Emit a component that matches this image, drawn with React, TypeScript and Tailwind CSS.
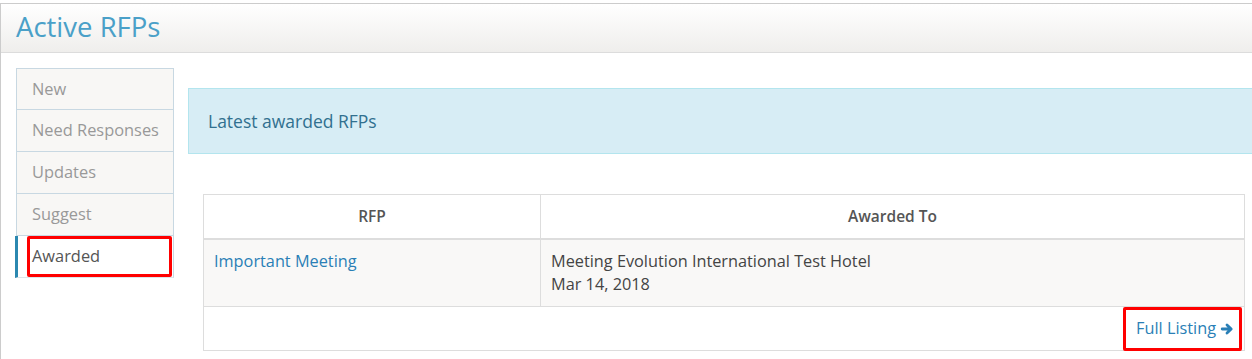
import React from "react";

const font = { fontFamily: '"Open Sans", "Liberation Sans", sans-serif' };

function Arrow() {
  return (
    <svg width="14" height="14" viewBox="0 0 16 16" className="ml-[4px]">
      <path d="M2.5 8H12.5M8 3.5L12.8 8L8 12.5" fill="none" stroke="#2a7fb6" strokeWidth="3.2" strokeLinecap="round" strokeLinejoin="round" />
    </svg>
  );
}

export default function App() {
  const items = ["New", "Need Responses", "Updates", "Suggest"];
  return (
    <div className="w-[1252px] h-[359px] bg-white pt-[3px] overflow-hidden" style={font}>
      <div className="border-t border-l border-[#cccccc] h-[356px] overflow-hidden">
        <div className="h-[49px] border-b border-[#dcdcdc] bg-gradient-to-b from-white to-[#efeeec] flex items-center pl-[15px]">
          <h1 className="text-[27.5px] text-[#4aa0c8] leading-none mt-[-3px]">Active RFPs</h1>
        </div>
        <div className="flex pl-[15px] pt-[15px]">
          <ul className="w-[158px] shrink-0">
            {items.map((t, i) => (
              <li
                key={t}
                className={`h-[42px] bg-[#f8f7f5] border-x border-b border-[#c8d8e2] ${i === 0 ? "border-t" : ""} flex items-center pl-[15px] text-[16.4px] text-[#999999]`}
              >
                {t}
              </li>
            ))}
            <li className="relative h-[42px] bg-white border-l-[3px] border-[#2b88b0] ml-[-1px] border-r border-r-[#c8d8e2] border-b border-b-[#dde5ea] flex items-center pl-[14px] text-[16.4px] text-[#555]">
              Awarded
              <span className="absolute left-[9px] right-[1px] top-0 bottom-0 border-[3px] border-[#ff0000] rounded-[2px]" />
            </li>
          </ul>
          <div className="ml-[14px] pt-[20px] flex-1 min-w-0">
            <div className="w-[1100px] h-[66px] bg-[#d7edf5] border border-[#b3e5ee] flex items-center pl-[19px] text-[17.5px] text-[#31708f]">
              Latest awarded RFPs
            </div>
            <div className="ml-[15px] mt-[40px] w-[1042px] border border-[#dddddd] text-[16.3px]">
              <div className="flex h-[45px] border-b-2 border-[#dddddd] font-semibold text-[15.5px] text-[#555]">
                <div className="w-[337px] border-r border-[#dddddd] flex items-center justify-center">RFP</div>
                <div className="flex-1 flex items-center justify-center">Awarded To</div>
              </div>
              <div className="flex bg-[#f9f8f7] border-b border-[#dddddd] leading-[23px]">
                <div className="w-[337px] border-r border-[#dddddd] py-[10px] pl-[10px] text-[#2a7fb6]">Important Meeting</div>
                <div className="flex-1 py-[10px] pl-[10px] text-[#444]">
                  <div>Meeting Evolution International Test Hotel</div>
                  <div>Mar 14, 2018</div>
                </div>
              </div>
              <div className="relative h-[43px] flex items-center justify-end pr-[10px]">
                <span className="text-[#2a7fb6] flex items-center">
                  Full Listing <Arrow />
                </span>
                <span className="absolute right-[2px] top-0 bottom-[-1px] w-[119px] border-[3px] border-[#ff0000] rounded-[2px]" />
              </div>
            </div>
          </div>
        </div>
      </div>
    </div>
  );
}
